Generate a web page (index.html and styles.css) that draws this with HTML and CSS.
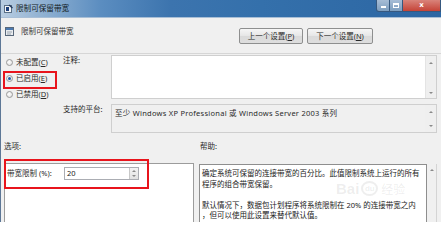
FILE: index.html
```html
<!DOCTYPE html>
<html lang="zh-CN">
<head>
<meta charset="utf-8">
<link rel="stylesheet" href="styles.css">
</head>
<body>
<div class="window">
  <div class="titlebar">
    <svg class="app-icon" width="9" height="9" viewBox="0 0 9 9">
      <rect x="0.5" y="1.5" width="7" height="7" fill="#f4f6f8" stroke="#5a6f86"/>
      <path d="M2 3 L5 3 L5 7 L2 7 Z" fill="#1d3f7a"/>
      <path d="M5 1 L8.5 4" stroke="#233a5c" stroke-width="1.4"/>
    </svg>
    <span class="title">限制可保留带宽</span>
    <div class="controls">
      <span class="ctl min"><i></i></span>
      <span class="ctl max"><i></i></span>
      <span class="ctl close">x</span>
    </div>
  </div>

  <div class="header">
    <svg class="hdr-icon" width="9" height="9" viewBox="0 0 9 9">
      <rect x="0.5" y="0.5" width="8" height="8" fill="#e9ecef" stroke="#59687a"/>
      <rect x="1" y="1" width="7" height="2" fill="#4b79b0"/>
      <path d="M2 5 H7 M2 7 H6" stroke="#9aa3ad" stroke-width="1"/>
    </svg>
    <span class="hdr-title">限制可保留带宽</span>
    <div class="nav">
      <button class="btn prev">上一个设置(<u>P</u>)</button>
      <button class="btn next">下一个设置(<u>N</u>)</button>
    </div>
  </div>

  <div class="settings">
    <div class="radios">
      <div class="radio"><span class="dot"></span><span>未配置(<u>C</u>)</span></div>
      <div class="radio"><span class="dot on"></span><span>已启用(<u>E</u>)</span></div>
      <div class="radio"><span class="dot"></span><span>已禁用(<u>D</u>)</span></div>
      <div class="mark mark-radio"></div>
    </div>
    <div class="lbl">注释:</div>
    <div class="box comment">
      <div class="area"></div>
      <div class="sb"><span class="up"></span><span class="down"></span></div>
    </div>
    <div class="lbl">支持的平台:</div>
    <div class="box platform">
      <div class="area">至少 Windows XP Professional 或 Windows Server 2003 系列</div>
      <div class="sb"><span class="up"></span><span class="down"></span></div>
    </div>
  </div>

  <div class="lower">
    <div class="sec-lbl">选项:</div>
    <div class="sec-lbl help-lbl">帮助:</div>
    <div class="options">
      <span class="opt-lbl">带宽限制 (%):</span>
      <div class="spin">
        <span class="val">20</span>
        <div class="spin-btns"><span class="up"></span><span class="down"></span></div>
      </div>
    </div>
    <div class="help">
      <div class="help-text">
        <p>确定系统可保留的连接带宽的百分比。此值限制系统上运行的所有<br>程序的组合带宽保留。</p>
        <p>默认情况下，数据包计划程序将系统限制在 20% 的连接带宽之内<br>，但可以使用此设置来替代默认值。</p>
        <div class="watermark"><span class="wm-bai">Bai</span><span class="wm-du">du</span><span class="wm-jy">经验</span></div>
      </div>
      <div class="sb"><span class="up"></span></div>
    </div>
    <div class="mark mark-opt"></div>
  </div>
</div>
</body>
</html>
```

FILE: styles.css
```css
* { box-sizing: border-box; margin: 0; padding: 0; }

body {
  background: #ffffff;
  font-family: "Noto Sans", "Noto Sans CJK SC", sans-serif;
  font-size: 7.5px;
  line-height: 9px;
  color: #1b1b1b;
}

u { text-decoration: underline; }

.window {
  height: 222px;
  background: #f0f0f0;
  border-left: 1px solid #5d7796;
  display: flex;
  flex-direction: column;
}

/* title bar */
.titlebar {
  height: 18px;
  flex: none;
  display: flex;
  align-items: center;
  padding-left: 3px;
  background: linear-gradient(to right, #b9cde1 0px, #96b5d4 35px, #5b8dc0 100px, #3c74ae 170px, #3470ab 260px, #2c66a3 441px);
  border-bottom: 1px solid #a9bfd6;
}
.app-icon { flex: none; }
.title {
  margin-left: 3px;
  font-size: 7.6px;
  color: #121a24;
}
.controls {
  margin-left: auto;
  align-self: flex-start;
  display: flex;
  height: 12px;
}
.ctl {
  height: 12px;
  display: flex;
  align-items: center;
  justify-content: center;
  border: 1px solid #36587f;
  border-top: none;
  background: linear-gradient(#a7bdd6, #7d9ebf);
}
.ctl.min { width: 14px; border-radius: 0 0 0 3px; }
.ctl.min i { width: 5px; height: 2px; background: #fff; margin-top: 3px; }
.ctl.max { width: 13px; border-left: none; }
.ctl.max i { width: 6px; height: 5px; border: 1px solid #fff; border-top-width: 2px; }
.ctl.close {
  width: 38px;
  border-left: none;
  background: linear-gradient(#d9837a, #c54337);
  color: #fff;
  font-family: "DejaVu Sans", sans-serif;
  font-weight: bold;
  font-size: 7px;
}

/* header */
.header {
  height: 36px;
  flex: none;
  display: flex;
  align-items: flex-start;
  padding: 9px 0 0 4px;
  border-bottom: 1px solid #d6d6d6;
}
.hdr-icon { flex: none; }
.hdr-title { margin-left: 7px; line-height: 9px; color: #333; }
.nav {
  margin-left: auto;
  margin-right: 68px;
  margin-top: 1px;
  display: flex;
  gap: 4px;
}
.btn {
  height: 16px;
  border: 1px solid #8e8f8f;
  border-radius: 2px;
  background: linear-gradient(#f6f6f6, #e6e6e6 50%, #dadada 51%, #dedede);
  font: inherit;
  color: #2a2a2a;
  display: flex;
  align-items: center;
  justify-content: center;
}
.btn.prev { width: 64px; }
.btn.next { width: 66px; }

/* settings */
.settings {
  flex: none;
  display: grid;
  grid-template-columns: 59px 51px 326px;
  grid-template-rows: 44px 29px;
  row-gap: 5px;
  padding-top: 1px;
}
.radios {
  grid-row: 1 / 3;
  position: relative;
  padding-left: 5px;
}
.radio {
  height: 16px;
  display: flex;
  align-items: center;
  gap: 3px;
  color: #2a2a2a;
}
.radio:first-child { height: 15px; }
.dot {
  width: 7px;
  height: 7px;
  border-radius: 50%;
  border: 1px solid #9a9a9a;
  background: radial-gradient(circle at 40% 40%, #ffffff, #dcdcdc);
  display: flex;
  align-items: center;
  justify-content: center;
}
.dot.on::after {
  content: "";
  width: 3px;
  height: 3px;
  border-radius: 50%;
  background: #1f5aa8;
}
.mark {
  position: absolute;
  border: 2px solid #e8141c;
}
.mark-radio { left: 2px; top: 16px; width: 54px; height: 18px; }

.lbl { padding: 1px 0 0 3px; color: #2a2a2a; white-space: nowrap; }

.box {
  display: flex;
  border: 1px solid #cfcfcf;
}
.box .area { flex: 1; }
.comment .area { background: #fff; }
.platform { background: #f0f0f0; }
.platform .area { padding: 4px 0 0 3px; white-space: nowrap; color: #2a2a2a; letter-spacing: 0.26px; }
.sb {
  width: 11px;
  flex: none;
  display: flex;
  flex-direction: column;
  justify-content: space-between;
  align-items: center;
  padding: 6px 0 4px;
  background: #efefef;
  border-left: 1px solid #e4e4e4;
}
.up, .down { width: 0; height: 0; border-left: 2px solid transparent; border-right: 2px solid transparent; }
.up { border-bottom: 2px solid #8a8a8a; }
.down { border-top: 2px solid #8a8a8a; }
.platform .sb { padding: 6px 0 5px; border-left: none; }

/* lower */
.lower {
  flex: 1;
  position: relative;
  display: grid;
  grid-template-columns: 190px 238px;
  grid-template-rows: 9px 1fr;
  column-gap: 5px;
  row-gap: 12px;
  padding: 9px 0 0 3px;
}
.sec-lbl { color: #2a2a2a; }
.help-lbl { padding-left: 1px; }

.options {
  background: #fff;
  border: 1px solid #9c9c9c;
  border-bottom: none;
  display: flex;
  align-items: flex-start;
  padding: 3px 0 0 2px;
}
.opt-lbl { width: 57px; padding-top: 2px; white-space: nowrap; color: #2a2a2a; }
.spin {
  width: 75px;
  height: 13px;
  border: 1px solid #abadb3;
  background: #fff;
  display: flex;
  align-items: center;
}
.val { flex: 1; padding-left: 2px; }
.spin-btns {
  width: 9px;
  height: 11px;
  display: flex;
  flex-direction: column;
  justify-content: space-around;
  align-items: center;
  background: linear-gradient(#f4f4f4, #e2e2e2);
  border-left: 1px solid #c8c8c8;
}

.help {
  margin-top: 1px;
  display: flex;
  border-right: 1px solid #d4d4d4;
}
.help-text {
  flex: 1;
  position: relative;
  background: #fff;
  border: 1px solid #8e8e8e;
  border-bottom: none;
  padding: 3px 0 0 2px;
  line-height: 10.5px;
  white-space: nowrap;
  color: #222;
}
.help-text p + p { margin-top: 10.5px; }
.help .sb { width: 9px; justify-content: flex-start; padding-top: 5px; border-left: none; background: #f0f0f0; }

.watermark {
  position: absolute;
  left: 136px;
  top: 15px;
  height: 17px;
  display: flex;
  align-items: center;
  color: rgba(120, 120, 120, 0.13);
  font-family: "Liberation Sans", sans-serif;
}
.wm-bai { font-size: 15px; line-height: 17px; font-weight: bold; }
.wm-du {
  margin-left: 2px;
  width: 17px;
  height: 15px;
  border-radius: 50%;
  border: 2px solid rgba(120, 120, 120, 0.13);
  font-size: 8px;
  line-height: 11px;
  text-align: center;
  font-weight: bold;
}
.wm-jy { margin-left: 3px; font-family: "Noto Sans CJK SC", sans-serif; font-size: 12px; line-height: 16px; }

.mark-opt { left: 3px; top: 26px; width: 145px; height: 30px; }
```
